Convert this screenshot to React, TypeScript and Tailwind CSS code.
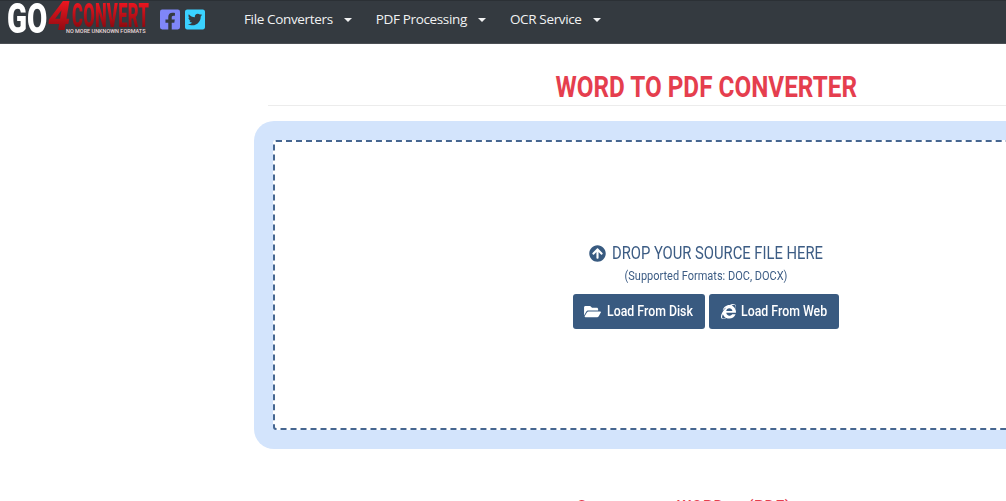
import { FaFacebookSquare, FaTwitterSquare, FaArrowCircleUp, FaFolderOpen, FaInternetExplorer } from "react-icons/fa";

const roboto = "font-['Roboto',sans-serif]";

function NavItem({ label, className }: { label: string; className: string }) {
  return (
    <div className={`flex items-center text-[#f1f2f3] text-[13.5px] font-['Open_Sans',sans-serif] ${className}`}>
      <span className="inline-block tracking-[-0.35px]">{label}</span>
      <span className="ml-[11px] mt-[1px] w-0 h-0 border-x-[4px] border-x-transparent border-t-[4px] border-t-[#f1f2f3]" />
    </div>
  );
}

export default function App() {
  return (
    <div className="w-[1006px] h-[501px] overflow-hidden bg-white relative">
      <nav className="h-[44px] pb-[6px] bg-[#343a40] border-t border-[#2b3035] border-b border-b-[#4b4f54] flex items-center">
        <div className="ml-[8px] w-[142px] h-[36px] relative shrink-0">
          <span className={`absolute left-[-1px] top-0 origin-left scale-x-[0.7] text-white text-[42px] font-black leading-[36px] ${roboto}`}>GO</span>
          <span className={`absolute left-[40px] top-0 italic text-[40px] font-black leading-[32px] bg-gradient-to-b from-[#ee1620] to-[#8a0a10] bg-clip-text [-webkit-text-fill-color:transparent] ${roboto}`}>4</span>
          <span className={`absolute left-[64px] top-[1px] origin-left scale-x-[0.49] text-[34px] font-black tracking-[0.5px] leading-[26px] whitespace-nowrap bg-gradient-to-b from-[#ee1620] to-[#8a0a10] bg-clip-text [-webkit-text-fill-color:transparent] ${roboto}`}>CONVERT</span>
          <span className={`absolute left-[58px] top-[27px] text-[#e8d8d8] text-[5.5px] font-medium leading-[6px] whitespace-nowrap ${roboto}`}>NO MORE UNKNOWN FORMATS</span>
        </div>
        <div className="ml-[10px] flex items-center gap-[5px] shrink-0">
          <FaFacebookSquare className="w-[20px] h-[23px] text-[#7f86f8]" />
          <FaTwitterSquare className="w-[20px] h-[23px] text-[#3ad2ff]" />
        </div>
        <NavItem label="File Converters" className="ml-[39px]" />
        <NavItem label="PDF Processing" className="ml-[24px]" />
        <NavItem label="OCR Service" className="ml-[24px]" />
      </nav>

      <main className="ml-[254px] w-[904px]">
        <div className="ml-[14px] pr-[14px] h-[62px] border-b border-[#ececec] flex items-end justify-center">
          <h1 className={`origin-center scale-x-[0.81] translate-y-[10px] whitespace-nowrap text-[#e53e4e] text-[30px] font-bold leading-[56px] ${roboto}`}>WORD TO PDF CONVERTER</h1>
        </div>

        <section className="mt-[15px] h-[328px] rounded-[20px] bg-[#d3e4fc] p-[19px]">
          <div className="h-full border-2 border-dashed border-[#466690] rounded-[3px] bg-white flex flex-col items-center justify-center">
            <div className="flex items-center text-[#3c5c84]">
              <FaArrowCircleUp className="w-[17px] h-[17px] mr-[6px] text-[#385a80]" />
              <span className={`inline-block whitespace-nowrap scale-x-[0.82] origin-left w-[211px] text-[18px] leading-[24px] ${roboto}`}>DROP YOUR SOURCE FILE HERE</span>
            </div>
            <p className={`mt-[2px] h-[18px] whitespace-nowrap scale-x-[0.915] text-[#3c5c84] text-[12px] leading-[18px] ${roboto}`}>(Supported Formats: DOC, DOCX)</p>
            <div className="mt-[9px] flex gap-[4px]">
              <button className="w-[132px] h-[35px] rounded-[3px] bg-[#395a80] text-white flex items-center pl-[11px]">
                <FaFolderOpen className="w-[17px] h-[15px] mr-[6px] shrink-0" />
                <span className={`inline-block origin-left scale-x-[0.85] whitespace-nowrap text-[14.5px] font-medium ${roboto}`}>Load From Disk</span>
              </button>
              <button className="w-[130px] h-[35px] rounded-[3px] bg-[#395a80] text-white flex items-center pl-[12px]">
                <FaInternetExplorer className="w-[15px] h-[15px] mr-[5px] shrink-0" />
                <span className={`inline-block origin-left scale-x-[0.85] whitespace-nowrap text-[14.5px] font-medium ${roboto}`}>Load From Web</span>
              </button>
            </div>
          </div>
        </section>

        <p className={`mt-[48px] pr-[45px] text-center whitespace-nowrap text-[#e53e4e] text-[16px] tracking-[0.4px] font-medium leading-[20px] ${roboto}`}>Convert your WORD to (PDF)</p>
      </main>
    </div>
  );
}
